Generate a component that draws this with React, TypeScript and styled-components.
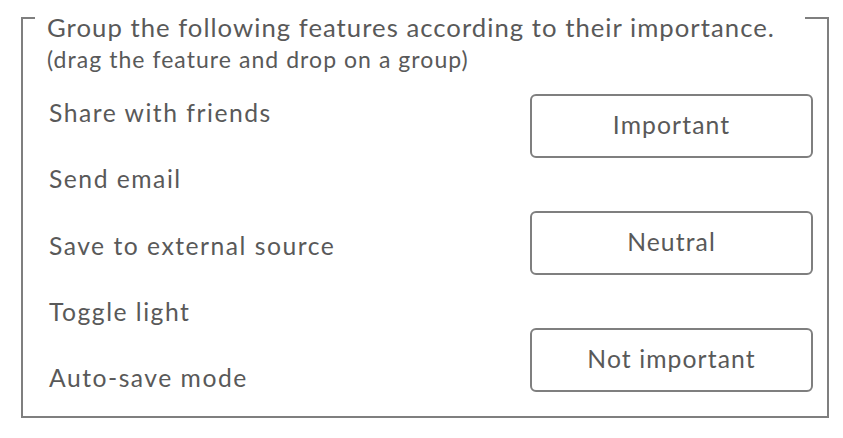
import React from "react";
import styled, { createGlobalStyle } from "styled-components";

const GlobalStyle = createGlobalStyle`
  html, body {
    margin: 0;
    padding: 0;
    background: #ffffff;
  }
  body {
    font-family: Lato, "Open Sans", sans-serif;
    color: #595959;
  }
`;

const Page = styled.div`
  padding: 17px 0 0 21px;
`;

const Frame = styled.section`
  box-sizing: border-box;
  width: 808px;
  height: 401px;
  border: 2px solid #7f7f7f;
  border-top: none;
  display: flex;
  flex-direction: column;
`;

const Header = styled.header`
  display: flex;
  align-items: flex-start;
`;

const Segment = styled.div<{ $w: number }>`
  width: ${(p) => p.$w}px;
  flex: none;
  border-top: 2px solid #7f7f7f;
`;

const TitleBlock = styled.div`
  flex: 1;
  margin-top: -6px;
  padding-left: 12px;
`;

const Title = styled.h1`
  margin: 0;
  font-weight: 400;
  font-size: 25.7px;
  letter-spacing: 1.03px;
  line-height: 32px;
  white-space: nowrap;
`;

const Subtitle = styled.p`
  margin: 2px 0 0;
  font-size: 23px;
  letter-spacing: 1.05px;
  line-height: 28px;
  white-space: nowrap;
`;

const Body = styled.div`
  display: flex;
  justify-content: space-between;
  padding: 21px 14px 0 26px;
`;

const ItemList = styled.ul`
  list-style: none;
  margin: 0;
  padding: 4px 0 0;
  display: flex;
  flex-direction: column;
  gap: 36.25px;
`;

const Item = styled.li`
  font-size: 24.7px;
  letter-spacing: 1.5px;
  line-height: 30px;
  white-space: nowrap;
`;

const GroupList = styled.div`
  display: flex;
  flex-direction: column;
  gap: 53px;
  width: 283px;
`;

const Group = styled.div`
  box-sizing: border-box;
  height: 64px;
  border: 2px solid #7f7f7f;
  border-radius: 6px;
  display: flex;
  align-items: center;
  justify-content: center;
  font-size: 24.7px;
  letter-spacing: 1.1px;
  padding-bottom: 3px;
`;

const items = [
  "Share with friends",
  "Send email",
  "Save to external source",
  "Toggle light",
  "Auto-save mode",
];

const groups = ["Important", "Neutral", "Not important"];

export default function App() {
  return (
    <>
      <GlobalStyle />
      <Page>
        <Frame>
          <Header>
            <Segment $w={12} />
            <TitleBlock>
              <Title>Group the following features according to their importance.</Title>
              <Subtitle>(drag the feature and drop on a group)</Subtitle>
            </TitleBlock>
            <Segment $w={22} />
          </Header>
          <Body>
            <ItemList>
              {items.map((t) => (
                <Item key={t}>{t}</Item>
              ))}
            </ItemList>
            <GroupList>
              {groups.map((g) => (
                <Group key={g}>{g}</Group>
              ))}
            </GroupList>
          </Body>
        </Frame>
      </Page>
    </>
  );
}
